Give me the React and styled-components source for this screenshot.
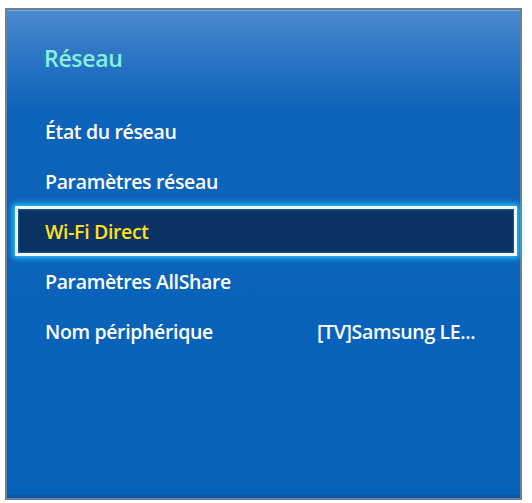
import React from 'react';
import styled, { createGlobalStyle } from 'styled-components';

const GlobalStyle = createGlobalStyle`
  html, body {
    margin: 0;
    padding: 0;
    background: #ffffff;
  }
  body {
    font-family: 'Open Sans', 'Noto Sans', 'Liberation Sans', sans-serif;
  }
`;

const Page = styled.div`
  width: 532px;
  height: 503px;
  padding: 8px 10px 3px 5px;
  box-sizing: border-box;
`;

const Panel = styled.div`
  height: 100%;
  box-sizing: border-box;
  border: 2px solid #6c7f93;
  box-shadow: inset 0 1px 0 #7ea8d6, inset 0 -3px 0 #0a58a6;
  background: linear-gradient(
    to bottom,
    #4d8bcf 0px,
    #2f78c6 40px,
    #0d63ba 100px,
    #0662b9 100%
  );
  display: flex;
  flex-direction: column;
`;

const Title = styled.h1`
  margin: 0;
  padding: 36px 0 0 37px;
  height: 96px;
  box-sizing: border-box;
  font-size: 23px;
  line-height: 24px;
  font-weight: 600;
  letter-spacing: -0.3px;
  color: #86f0dc;
`;

const List = styled.ul`
  list-style: none;
  margin: 0;
  padding: 0 3px 0 8px;
  display: flex;
  flex-direction: column;
`;

const Row = styled.li`
  height: 50px;
  box-sizing: border-box;
  display: grid;
  grid-template-columns: 272px 1fr;
  align-items: center;
  padding: 0 16px 0 27px;
  border: 3px solid ${(p) => (p.$active ? '#eefaff' : 'transparent')};
  background: ${(p) => (p.$active ? '#0a3263' : 'transparent')};
  box-shadow: ${(p) =>
    p.$active ? '0 0 6px 2px #2fc6ff, inset 0 0 2px 1px #1a5aa0' : 'none'};
  font-size: 19.5px;
  font-weight: 600;
  letter-spacing: -0.35px;
  color: ${(p) => (p.$active ? '#ffe11c' : '#ffffff')};
`;

const Label = styled.span`
  white-space: nowrap;
`;

const Value = styled.span`
  white-space: nowrap;
  overflow: hidden;
`;

const items = [
  { label: 'État du réseau' },
  { label: 'Paramètres réseau' },
  { label: 'Wi-Fi Direct', active: true },
  { label: 'Paramètres AllShare' },
  { label: 'Nom périphérique', value: '[TV]Samsung LE...' },
];

export default function App() {
  return (
    <>
      <GlobalStyle />
      <Page>
        <Panel>
          <Title>Réseau</Title>
          <List>
            {items.map((item) => (
              <Row key={item.label} $active={item.active}>
                <Label>{item.label}</Label>
                {item.value && <Value>{item.value}</Value>}
              </Row>
            ))}
          </List>
        </Panel>
      </Page>
    </>
  );
}
